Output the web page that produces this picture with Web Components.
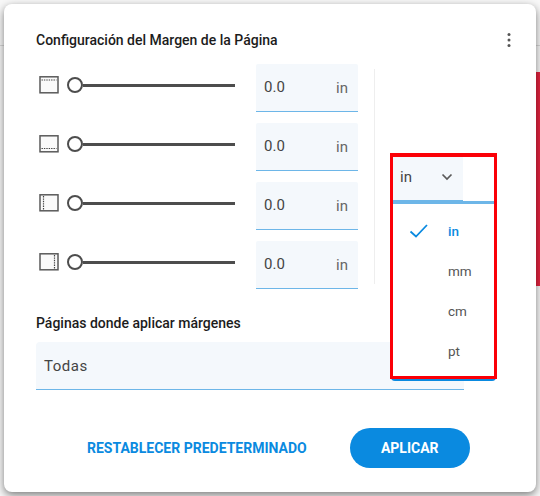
<!DOCTYPE html>
<html lang="es">
<head>
<meta charset="utf-8">
<title>Configuración del Margen</title>
<style>
  html, body { margin: 0; height: 100%; overflow: hidden; }
  body { font-family: Roboto, "Liberation Sans", sans-serif; color: #333; }
</style>
</head>
<body>
<page-backdrop>
  <margin-dialog heading="Configuración del Margen de la Página">
    <margin-row slot="rows" side="top"></margin-row>
    <margin-row slot="rows" side="bottom"></margin-row>
    <margin-row slot="rows" side="left"></margin-row>
    <margin-row slot="rows" side="right"></margin-row>
    <unit-select slot="unit"></unit-select>
    <page-select slot="pages" label="Páginas donde aplicar márgenes" value="Todas"></page-select>
    <action-button slot="actions" kind="text">RESTABLECER PREDETERMINADO</action-button>
    <action-button slot="actions" kind="filled">APLICAR</action-button>
  </margin-dialog>
</page-backdrop>

<script>
// Fondo de la aplicación detrás del diálogo
class PageBackdrop extends HTMLElement {
    constructor() {
        super();
        this.attachShadow({ mode: 'open' });
    }

    connectedCallback() {
        this.shadowRoot.innerHTML = `
            <style>
                :host {
                    display: block;
                    position: relative;
                    width: 540px;
                    height: 496px;
                    padding: 4px;
                    box-sizing: border-box;
                    background: #f8f8f8;
                    overflow: hidden;
                }
                .line { position: absolute; left: 0; right: 0; top: 45px; height: 1px; background: #d8d8d8; }
                .red { position: absolute; right: 0; top: 72px; width: 12px; height: 214px; background: #e5243f; }
            </style>
            <div class="line"></div>
            <div class="red"></div>
            <slot></slot>
        `;
    }
}

class MarginDialog extends HTMLElement {
    constructor() {
        super();
        this.attachShadow({ mode: 'open' });
    }

    connectedCallback() {
        this.shadowRoot.innerHTML = `
            <style>
                :host {
                    display: flex;
                    flex-direction: column;
                    position: relative;
                    height: 488px;
                    box-sizing: border-box;
                    padding: 0 0 24px 32px;
                    background: #fff;
                    border-radius: 8px;
                    box-shadow: 0 3px 8px rgba(0, 0, 0, .5);
                }
                header {
                    display: flex;
                    align-items: center;
                    justify-content: space-between;
                    height: 72px;
                    flex: none;
                    padding-right: 17px;
                    box-sizing: border-box;
                }
                h2 {
                    margin: 0;
                    font: 500 14px/20px Roboto, sans-serif;
                    color: #1c1c1c;
                }
                svg { display: block; }
                .body {
                    display: flex;
                    height: 225px;
                    margin-top: -12px;
                    flex: none;
                }
                .rows {
                    display: flex;
                    flex-direction: column;
                    gap: 11px;
                    width: 322px;
                    flex: none;
                }
                .divider {
                    width: 1px;
                    height: 215px;
                    margin: 5px 0 0 16px;
                    background: #eeeeee;
                }
                .unit { padding-top: 93px; margin-left: 18px; }
                .pages { margin-top: 24px; width: 428px; }
                .actions {
                    display: flex;
                    align-items: center;
                    gap: 43px;
                    margin-top: 38px;
                    padding-left: 51px;
                }
            </style>
            <header>
                <h2>${this.getAttribute('heading')}</h2>
                <svg width="20" height="20" viewBox="0 0 20 20" fill="#555">
                    <circle cx="10" cy="4.4" r="1.5"/>
                    <circle cx="10" cy="10" r="1.5"/>
                    <circle cx="10" cy="15.6" r="1.5"/>
                </svg>
            </header>
            <div class="body">
                <div class="rows"><slot name="rows"></slot></div>
                <div class="divider"></div>
                <div class="unit"><slot name="unit"></slot></div>
            </div>
            <div class="pages"><slot name="pages"></slot></div>
            <div class="actions"><slot name="actions"></slot></div>
        `;
    }
}

// Icono, deslizador y campo numérico de un margen
class MarginRow extends HTMLElement {
    constructor() {
        super();
        this.attachShadow({ mode: 'open' });
    }

    connectedCallback() {
        const dotted = {
            top: 'M2.5 4H17.5',
            bottom: 'M2.5 13.5H17.5',
            left: 'M4.5 2V15.5',
            right: 'M15.5 2V15.5'
        };
        this.shadowRoot.innerHTML = `
            <style>
                :host {
                    display: flex;
                    align-items: flex-start;
                    height: 48px;
                }
                .icon { flex: none; margin: 12px 0 0 3px; }
                .slider {
                    display: flex;
                    align-items: center;
                    flex: none;
                    width: 168px;
                    height: 18px;
                    margin: 12px 21px 0 8px;
                }
                .thumb {
                    flex: none;
                    width: 16px;
                    height: 16px;
                    box-sizing: border-box;
                    border: 2px solid #4d4d4d;
                    border-radius: 50%;
                    background: #fff;
                }
                .track { flex: 1; height: 3px; background: #4d4d4d; }
                .field {
                    display: flex;
                    align-items: center;
                    justify-content: space-between;
                    width: 102px;
                    height: 48px;
                    padding: 0 10px 1px 8px;
                    box-sizing: border-box;
                    background: #f4f8fc;
                    border-bottom: 1px solid #6db6e8;
                    border-radius: 2px 2px 0 0;
                    font: 400 15px/20px Roboto, sans-serif;
                    color: #444;
                }
                .suffix { color: #666; font-size: 15px; padding-top: 2px; }
            </style>
            <svg class="icon" width="20" height="18" viewBox="0 0 20 18" fill="none">
                <rect x="1" y="0.8" width="18" height="16" fill="#fafafa" stroke="#5a5a5a" stroke-width="1.5"/>
                <path d="${dotted[this.getAttribute('side')]}" stroke="#444" stroke-width="1.2" stroke-dasharray="1.4 1"/>
            </svg>
            <div class="slider"><div class="thumb"></div><div class="track"></div></div>
            <div class="field"><span>0.0</span><span class="suffix">in</span></div>
        `;
    }
}

// Selector de unidades con su menú abierto
class UnitSelect extends HTMLElement {
    constructor() {
        super();
        this.attachShadow({ mode: 'open' });
    }

    connectedCallback() {
        const items = ['in', 'mm', 'cm', 'pt'];
        this.shadowRoot.innerHTML = `
            <style>
                :host {
                    display: block;
                    position: relative;
                    width: 70px;
                    height: 47px;
                    font-family: Roboto, sans-serif;
                }
                .box {
                    position: relative;
                    z-index: 2;
                    display: flex;
                    align-items: center;
                    justify-content: space-between;
                    height: 100%;
                    padding: 0 10px 4px 7px;
                    box-sizing: border-box;
                    background: #f4f8fc;
                    border-bottom: 4px solid #6db6e8;
                    font-size: 15px;
                    color: #444;
                }
                .menu {
                    position: absolute;
                    z-index: 1;
                    left: -2px;
                    top: 44px;
                    width: 105px;
                    height: 180px;
                    box-sizing: border-box;
                    border-top: 3px solid #6db6e8;
                    background: #fff;
                    border-radius: 0 0 4px 4px;
                    border-bottom: 2px solid #0a8ae0;
                    padding-top: 7px;
                }
                .item {
                    position: relative;
                    height: 40px;
                    line-height: 40px;
                    padding-left: 57px;
                    font-size: 13.5px;
                    color: #555;
                }
                .item:first-child { height: 40.2px; }
                .item.on { color: #0a8ae0; font-weight: 500; }
                .check { position: absolute; left: 18px; top: 12px; }
                .mark {
                    position: absolute;
                    z-index: 3;
                    left: -3px;
                    top: -4px;
                    width: 107px;
                    height: 226px;
                    box-sizing: border-box;
                    border: 3px solid #fb0007;
                    border-top-width: 4px;
                }
            </style>
            <div class="box">
                <span>in</span>
                <svg width="12" height="8" viewBox="0 0 12 8" fill="none">
                    <path d="M1.5 1.5L6 6L10.5 1.5" stroke="#5a5a5a" stroke-width="1.7"/>
                </svg>
            </div>
            <div class="menu">
                ${items.map((u, i) => `
                    <div class="item ${i === 0 ? 'on' : ''}">
                        ${i === 0 ? `<svg class="check" width="20" height="16" viewBox="0 0 20 16" fill="none"><path d="M1.5 8.5L7 13.5L18 2" stroke="#0a8ae0" stroke-width="1.8"/></svg>` : ''}${u}
                    </div>`).join('')}
            </div>
            <div class="mark"></div>
        `;
    }
}

class PageSelect extends HTMLElement {
    constructor() {
        super();
        this.attachShadow({ mode: 'open' });
    }

    connectedCallback() {
        this.shadowRoot.innerHTML = `
            <style>
                :host { display: block; font-family: Roboto, sans-serif; }
                label {
                    display: block;
                    font: 500 14px/20px Roboto, sans-serif;
                    color: #1c1c1c;
                    margin-bottom: 9px;
                }
                .box {
                    height: 48px;
                    padding: 0 8px;
                    box-sizing: border-box;
                    background: #f4f8fc;
                    border-bottom: 1px solid #6db6e8;
                    border-radius: 4px 4px 0 0;
                    font-size: 15px;
                    line-height: 49px;
                    letter-spacing: .5px;
                    color: #444;
                }
            </style>
            <label>${this.getAttribute('label')}</label>
            <div class="box">${this.getAttribute('value')}</div>
        `;
    }
}

class ActionButton extends HTMLElement {
    constructor() {
        super();
        this.attachShadow({ mode: 'open' });
    }

    connectedCallback() {
        const filled = this.getAttribute('kind') === 'filled';
        this.shadowRoot.innerHTML = `
            <style>
                :host {
                    display: inline-flex;
                    align-items: center;
                    justify-content: center;
                    height: 40px;
                    font: 700 14px/16px Roboto, sans-serif;
                    white-space: nowrap;
                    color: ${filled ? '#fff' : '#0a8ae0'};
                    background: ${filled ? '#0a8ae0' : 'transparent'};
                    border-radius: 20px;
                    width: ${filled ? '120px' : 'auto'};
                }
            </style>
            <slot></slot>
        `;
    }
}

customElements.define('page-backdrop', PageBackdrop);
customElements.define('margin-dialog', MarginDialog);
customElements.define('margin-row', MarginRow);
customElements.define('unit-select', UnitSelect);
customElements.define('page-select', PageSelect);
customElements.define('action-button', ActionButton);
</script>
</body>
</html>
